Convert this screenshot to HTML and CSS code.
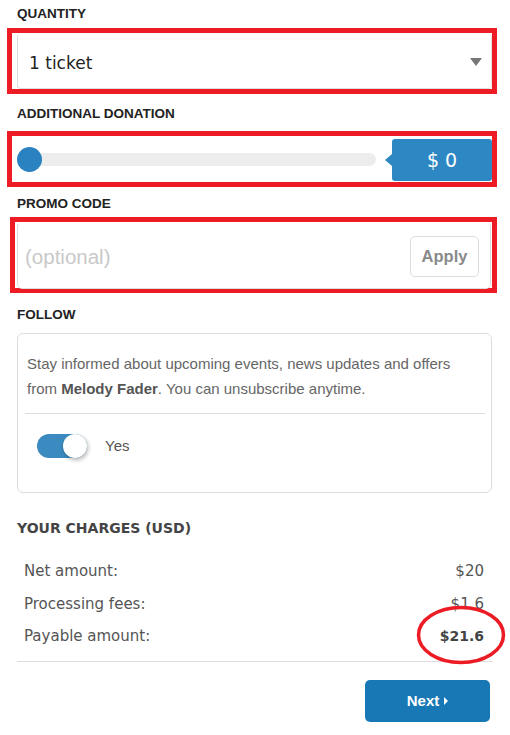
FILE: index.html
```html
<!DOCTYPE html>
<html>
<head>
<meta charset="utf-8">
<link rel="stylesheet" href="styles.css">
</head>
<body>
<div class="page">
  <div class="label lbl-qty">QUANTITY</div>
  <div class="hl hl-qty">
    <div class="select">
      <span class="select-text">1 ticket</span>
      <span class="caret"></span>
    </div>
  </div>

  <div class="label lbl-don">ADDITIONAL DONATION</div>
  <div class="hl hl-don">
    <div class="slider">
      <div class="track"></div>
      <div class="thumb"></div>
    </div>
    <div class="bubble">$ 0</div>
  </div>

  <div class="label lbl-promo">PROMO CODE</div>
  <div class="hl hl-promo">
    <div class="promo">
      <span class="placeholder">(optional)</span>
      <span class="apply">Apply</span>
    </div>
  </div>

  <div class="label lbl-follow">FOLLOW</div>
  <div class="card">
    <p class="card-text">Stay informed about upcoming events, news updates and offers from <b>Melody Fader</b>. You can unsubscribe anytime.</p>
    <div class="divider"></div>
    <div class="toggle-row">
      <div class="toggle"><div class="knob"></div></div>
      <span class="yes">Yes</span>
    </div>
  </div>

  <div class="charges">
    <div class="charges-title">YOUR CHARGES (USD)</div>
    <div class="rows">
      <div class="row"><span>Net amount:</span><span>$20</span></div>
      <div class="row"><span>Processing fees:</span><span>$1.6</span></div>
      <div class="row"><span>Payable amount:</span><span class="total">$21.6</span></div>
    </div>
    <svg class="circle" width="96" height="66" viewBox="0 0 96 66"><ellipse cx="48" cy="33" rx="42.5" ry="27.5" fill="none" stroke="#ec1b24" stroke-width="3.5"/></svg>
  </div>

  <div class="actions">
    <div class="next">Next <span class="tri"></span></div>
  </div>
</div>
</body>
</html>
```

FILE: styles.css
```css
html, body {
  margin: 0;
  padding: 0;
  background: #fff;
}
.page {
  width: 475px;
  padding: 6px 18px 0 17px;
  font-family: "Liberation Sans", Arial, sans-serif;
}
.label {
  font-family: "Liberation Sans", Arial, sans-serif;
  font-weight: bold;
  font-size: 13.5px;
  line-height: 16px;
  height: 16px;
  color: #222;
}
.hl {
  border: 5px solid #ed1c24;
  box-sizing: border-box;
}
.hl-qty {
  margin: 6px -5px 0 -10px;
  height: 66px;
  padding-left: 5px;
}
.select {
  box-sizing: border-box;
  height: 56px;
  border: 1px solid #ddd;
  border-top-color: transparent;
  border-right-color: #e4e4e4;
  border-radius: 4px;
  display: flex;
  align-items: center;
  justify-content: space-between;
  padding: 3px 9px 0 11px;
}
.select-text {
  font-family: "DejaVu Sans", Verdana, sans-serif;
  font-size: 17px;
  color: #222;
}
.caret {
  width: 0;
  height: 0;
  border-left: 6.5px solid transparent;
  border-right: 6.5px solid transparent;
  border-top: 8px solid #777;
  margin-top: -1px;
}
.lbl-don { margin-top: 12px; }
.hl-don {
  margin: 9px -5px 0 -10px;
  height: 56px;
  display: flex;
  align-items: center;
  padding: 0 0 0 5px;
}
.slider {
  position: relative;
  flex: 1;
  height: 25px;
  margin-right: 16px;
}
.track {
  position: absolute;
  left: 10px;
  right: 0;
  top: 6px;
  height: 13px;
  border-radius: 7px;
  background: #ededed;
}
.thumb {
  position: absolute;
  left: 0;
  top: 0;
  width: 25px;
  height: 25px;
  border-radius: 50%;
  background: #2a82c0;
}
.bubble {
  position: relative;
  width: 100px;
  height: 42px;
  border-radius: 3px;
  background: #2c87c3;
  color: #fff;
  font-family: "DejaVu Sans", Verdana, sans-serif;
  font-size: 19px;
  display: flex;
  align-items: center;
  justify-content: center;
  margin-top: 1px;
}
.bubble::before {
  content: "";
  position: absolute;
  left: -7px;
  top: 15px;
  border-top: 6px solid transparent;
  border-bottom: 6px solid transparent;
  border-right: 7px solid #2c87c3;
}
.lbl-promo { margin-top: 9px; }
.hl-promo {
  margin: 5px -5px 0 -7px;
  height: 76px;
  padding: 0 1px 0 2px;
}
.promo {
  box-sizing: border-box;
  height: 67px;
  border: 1px solid #ddd;
  border-top-color: transparent;
  border-radius: 5px;
  display: flex;
  align-items: center;
  justify-content: space-between;
  padding: 2px 11px 0 7px;
}
.placeholder {
  font-size: 20.5px;
  color: #c9c9c9;
}
.apply {
  box-sizing: border-box;
  width: 69px;
  height: 41px;
  border: 1px solid #ddd;
  border-radius: 5px;
  display: flex;
  align-items: center;
  justify-content: center;
  font-weight: bold;
  font-size: 16.5px;
  color: #8a8a8a;
}
.lbl-follow { margin-top: 14px; }
.card {
  margin-top: 10px;
  box-sizing: border-box;
  height: 160px;
  border: 1px solid #ddd;
  border-radius: 6px;
  padding: 17px 6px 0 7px;
}
.card-text {
  margin: 0 30px 0 2px;
  font-size: 15px;
  line-height: 25px;
  color: #666;
}
.card-text b { color: #555; }
.divider {
  height: 1px;
  background: #ddd;
  margin-top: 12px;
}
.toggle-row {
  display: flex;
  align-items: center;
  margin-top: 20px;
  padding-left: 12px;
}
.toggle {
  position: relative;
  width: 50px;
  height: 24px;
  border-radius: 12px;
  background: #3b8bc0;
}
.knob {
  position: absolute;
  right: 0;
  top: 0;
  width: 24px;
  height: 24px;
  border-radius: 50%;
  background: #fff;
  box-shadow: 1px 2px 4px rgba(0,0,0,0.3);
}
.yes {
  margin-left: 18px;
  margin-top: -2px;
  font-size: 15px;
  color: #555;
}
.charges {
  position: relative;
  margin-top: 26px;
  font-family: "DejaVu Sans", Verdana, sans-serif;
}
.charges-title {
  font-weight: bold;
  font-size: 14px;
  line-height: 18px;
  color: #444;
}
.rows {
  margin-top: 18px;
  padding: 0 8px 8px 7px;
  border-bottom: 1px solid #ddd;
}
.row {
  display: flex;
  justify-content: space-between;
  align-items: center;
  height: 32.5px;
  font-size: 15px;
  color: #555;
}
.total {
  font-weight: bold;
  font-size: 14px;
  color: #444;
}
.circle {
  position: absolute;
  left: 396px;
  top: 83px;
}
.actions {
  display: flex;
  justify-content: flex-end;
  margin-top: 18px;
  padding-right: 2px;
}
.next {
  width: 125px;
  height: 42px;
  border-radius: 5px;
  background: #1778b5;
  color: #fff;
  font-weight: bold;
  font-size: 15px;
  display: flex;
  align-items: center;
  justify-content: center;
  gap: 5px;
}
.tri {
  width: 0;
  height: 0;
  border-top: 4px solid transparent;
  border-bottom: 4px solid transparent;
  border-left: 4px solid #fff;
}
```
